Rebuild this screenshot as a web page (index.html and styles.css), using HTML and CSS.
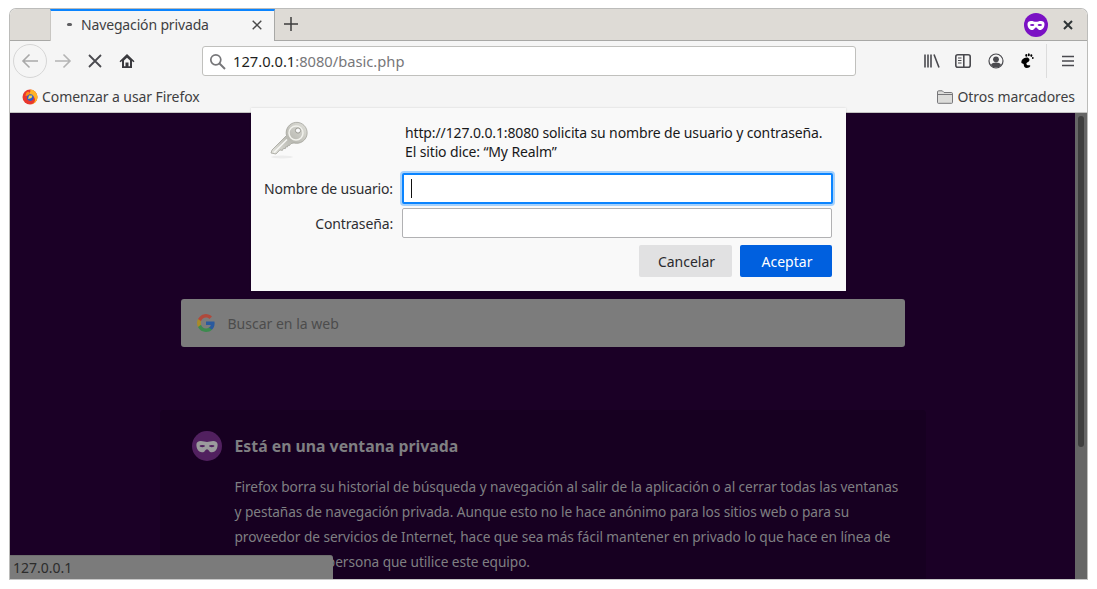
FILE: index.html
```html
<!DOCTYPE html>
<html lang="es">
<head>
<meta charset="utf-8">
<title>Navegación privada</title>
<link rel="stylesheet" href="styles.css">
</head>
<body>
<div class="window">
  <div class="tabbar">
    <div class="tab">
      <span class="tab-dot"></span>
      <span class="tab-title">Navegación privada</span>
      <svg class="tab-close" width="10" height="10" viewBox="0 0 10 10"><path d="M.7.7l8.600 8.600M9.300.7L.7 9.300" stroke="#4a4a4a" stroke-width="1.400" fill="none"/></svg>
    </div>
    <svg class="newtab" width="16" height="16" viewBox="0 0 16 16"><path d="M8 1v14M1 8h14" stroke="#3d3d3d" stroke-width="1.500" fill="none"/></svg>
    <span class="tab-fill"></span>
    <svg class="mask-badge" width="24" height="24" viewBox="0 0 24 24"><circle cx="12" cy="12" r="12" fill="#7a11c4"/><path d="M3.500 11c0-2 1.500-3 3.500-3 2 0 3.500.8 5 .8s3-.8 5-.8 3.500 1 3.500 3c0 3.500-2 6-4.500 6-2.500 0-2.500-2.500-4-2.500S10.500 17 8 17c-2.500 0-4.500-2.500-4.500-6z" fill="#fff"/><ellipse cx="8.200" cy="12" rx="2.200" ry=".9" fill="#7a11c4"/><ellipse cx="15.800" cy="12" rx="2.200" ry=".9" fill="#7a11c4"/></svg>
    <svg class="win-close" width="10" height="10" viewBox="0 0 10 10"><path d="M1 1l8 8M9 1L1 9" stroke="#2e3436" stroke-width="2" fill="none"/></svg>
  </div>
  <div class="navbar">
    <span class="back-btn"><svg width="18" height="16" viewBox="0 0 18 16"><path d="M17 8H2M8.500 1.500L2 8l6.500 6.500" stroke="#a9a9a9" stroke-width="1.600" fill="none"/></svg></span>
    <svg class="forward" width="18" height="16" viewBox="0 0 18 16"><path d="M1 8h15M9.500 1.500L16 8l-6.500 6.500" stroke="#b4b4b4" stroke-width="1.600" fill="none"/></svg>
    <svg class="stop" width="14" height="14" viewBox="0 0 14 14"><path d="M1 1l12 12M13 1L1 13" stroke="#4a4a4f" stroke-width="1.800" fill="none"/></svg>
    <svg class="home" width="16" height="16" viewBox="0 0 16 16"><path d="M8 1L.5 8.200l1 1L3 7.900V15h10V7.900l1.500 1.300 1-1z" fill="#3a3a3e"/><path d="M5 7.500L8 4.700l3 2.800v5.700H9.500V9.500h-3v3.700H5z" fill="#f5f5f5"/></svg>
    <div class="urlbar">
      <svg width="17" height="17" viewBox="0 0 17 17"><circle cx="6.800" cy="6.800" r="5" stroke="#77777a" stroke-width="1.700" fill="none"/><path d="M10.500 10.500L16 16" stroke="#77777a" stroke-width="2" fill="none"/></svg>
      <span class="url"><span class="url-host">127.0.0.1</span>:8080/basic.php</span>
    </div>
    <div class="tools">
      <svg width="16" height="16" viewBox="0 0 16 16"><path d="M1 1.500v13M4 1.500v13M7 1.500v13M10 1.500l5 13" stroke="#4a4a4f" stroke-width="1.600" fill="none"/></svg>
      <svg class="tool-sidebar" width="16" height="14" viewBox="0 0 16 14"><rect x=".8" y=".8" width="14.400" height="12.400" rx="2" stroke="#4a4a4f" stroke-width="1.600" fill="none"/><path d="M8.800 1v12" stroke="#4a4a4f" stroke-width="1.600"/><path d="M3 4h3.500M3 6.500h3.500M3 9h3.500" stroke="#4a4a4f" stroke-width="1.200"/></svg>
      <svg class="tool-account" width="16" height="16" viewBox="0 0 16 16"><circle cx="8" cy="8" r="7" stroke="#4a4a4f" stroke-width="1.200" fill="none"/><circle cx="8" cy="6.300" r="2.900" fill="#4a4a4f"/><path d="M2.800 12c1-2 3-2.600 5.200-2.600s4.200.6 5.200 2.600C12 13.700 10 14.500 8 14.500S4 13.700 2.800 12z" fill="#4a4a4f"/></svg>
      <svg width="14" height="16" viewBox="0 0 14 16"><path d="M6.500 4.500c-3 .2-5 2.200-5.200 4.500-.1 1.300 1 1.500 1.900 1.800 1.100.4.200 1.900 1.300 3.300 1 1.200 3.400 1 4.900.1 1.100-.7 1.200-1.700.3-1.900-1.400-.3-3 .1-3.300-1.400-.2-1 .9-1.500 2-2.100 1-.6 1.300-1.600.9-2.800-.4-1-1.600-1.600-2.800-1.500z" fill="#000"/><ellipse cx="6.300" cy="2.400" rx="1" ry="1.400" fill="#000"/><ellipse cx="8.800" cy="1.800" rx="1" ry="1.500" fill="#000"/><ellipse cx="11.300" cy="2.600" rx="1" ry="1.400" fill="#000"/><ellipse cx="12.800" cy="5" rx=".9" ry="1.100" fill="#000"/></svg>
    </div>
    <span class="nav-sep"></span>
    <svg class="menu" width="12" height="12" viewBox="0 0 12 12"><path d="M0 1.500h12M0 6h12M0 10.500h12" stroke="#4a4a4f" stroke-width="1.500" fill="none"/></svg>
  </div>
  <div class="bookmarks">
    <span class="bookmark">
      <svg width="16" height="16" viewBox="0 0 16 16"><circle cx="8" cy="8" r="7.500" fill="#e8372d"/><path d="M8 .5a7.500 7.500 0 0 1 7.500 7.500c0 2-1 4.500-3 6-1 .7-2.500 1.500-4.500 1.500 3 0 5-2.300 5-4.700 0-2.300-1.700-4.300-4-4.300L7 5C8 3.500 9 2 8 .5z" fill="#ffb326"/><circle cx="8.300" cy="8.600" r="3.300" fill="#2a5bd0"/><path d="M5 3c1.500-.5 2.500 0 3 1.500L6 6.500 3.500 7C3.500 5.500 4 4 5 3z" fill="#ff8a1c"/><path d="M7 6.500h3.500l-1 2.500-3.500 1z" fill="#ffd43a"/></svg>
      Comenzar a usar Firefox
    </span>
    <span class="bookmark bookmark-other">
      <svg width="16" height="14" viewBox="0 0 16 14"><path d="M.5 12.500V2A1.200 1.200 0 0 1 1.700.8h3.600L7 2.500h7.300A1.200 1.200 0 0 1 15.500 3.700v8.800a.8.800 0 0 1-.8.800H1.300a.8.800 0 0 1-.8-.8z" fill="#dcdcda" stroke="#77777a"/><path d="M1 4.500h14" stroke="#77777a"/></svg>
      Otros marcadores
    </span>
  </div>
  <main class="content">
    <div class="page">
      <div class="search">
        <svg width="18" height="18" viewBox="0 0 18 18"><path d="M17.600 9.200c0-.6-.1-1.300-.2-1.800H9v3.500h4.800a4.100 4.100 0 0 1-1.800 2.700v2.200h2.900c1.700-1.600 2.700-3.900 2.700-6.600z" fill="#2a5a9e"/><path d="M9 18c2.400 0 4.500-.8 5.900-2.200L12 13.600c-.8.500-1.800.9-3 .9-2.300 0-4.300-1.600-5-3.700H1v2.300A9 9 0 0 0 9 18z" fill="#3c8a4e"/><path d="M4 10.700a5.400 5.400 0 0 1 0-3.400V5H1a9 9 0 0 0 0 8z" fill="#a88a2a"/><path d="M9 3.600c1.300 0 2.500.5 3.400 1.300L15 2.400A9 9 0 0 0 1 5l3 2.300c.7-2.100 2.700-3.700 5-3.700z" fill="#b0493c"/></svg>
        <span class="search-text">Buscar en la web</span>
      </div>
      <section class="card">
        <div class="card-head">
          <svg width="30" height="30" viewBox="0 0 24 24"><circle cx="12" cy="12" r="12" fill="#51205f"/><path d="M3.500 11c0-2 1.500-3 3.500-3 2 0 3.500.8 5 .8s3-.8 5-.8 3.500 1 3.500 3c0 3.500-2 6-4.500 6-2.500 0-2.500-2.500-4-2.500S10.500 17 8 17c-2.500 0-4.500-2.500-4.500-6z" fill="#9b9b9d"/><ellipse cx="8.200" cy="12" rx="2.200" ry=".9" fill="#51205f"/><ellipse cx="15.800" cy="12" rx="2.200" ry=".9" fill="#51205f"/></svg>
          <h1 class="card-title">Está en una ventana privada</h1>
        </div>
        <p class="card-text">Firefox borra su historial de búsqueda y navegación al salir de la aplicación o al cerrar todas las ventanas y pestañas de navegación privada. Aunque esto no le hace anónimo para los sitios web o para su proveedor de servicios de Internet, hace que sea más fácil mantener en privado lo que hace en línea de cualquier otra persona que utilice este equipo.</p>
      </section>
    </div>
    <div class="scrollbar"><span class="thumb"></span></div>
    <div class="status">127.0.0.1</div>
  </main>
  <div class="dialog">
    <div class="dialog-head">
      <svg class="key" width="40" height="40" viewBox="0 0 40 40">
        <defs><linearGradient id="keyfill" x1="0" y1="1" x2="1" y2="0"><stop offset="0" stop-color="#e6e6e0"/><stop offset=".5" stop-color="#b9b9b2"/><stop offset="1" stop-color="#e2e2dc"/></linearGradient></defs>
        <ellipse cx="13" cy="37" rx="11" ry="1.500" fill="#ececec"/>
        <path d="M2 33l1-3L17.500 15.500A10.500 10.500 0 1 1 25 23l-3 .5-1.500 2-1.500-.3-.5 1.800-1.800-.2-.3 1.800-2-.2-1 2-2.500-.5L7 34z" fill="url(#keyfill)" stroke="#a2a29b" stroke-width=".8"/>
        <circle cx="27" cy="13" r="7" fill="none" stroke="#f1f1ec" stroke-width="1.500"/>
        <circle cx="29" cy="10.500" r="2.600" fill="#fafafa" stroke="#9a9a93"/>
        <path d="M5 32.500L18 19.500" stroke="#f8f8f5" stroke-width="1.500"/>
      </svg>
      <p class="dialog-msg">http://127.0.0.1:8080 solicita su nombre de usuario y contraseña.<br>El sitio dice: “My Realm”</p>
    </div>
    <div class="form-row">
      <label class="form-label">Nombre de usuario:</label>
      <div class="input input-focus"><span class="caret"></span></div>
    </div>
    <div class="form-row">
      <label class="form-label">Contraseña:</label>
      <div class="input"></div>
    </div>
    <div class="dialog-actions">
      <button class="btn">Cancelar</button>
      <button class="btn btn-primary">Aceptar</button>
    </div>
  </div>
</div>
</body>
</html>
```
FILE: styles.css
```css
* { box-sizing: border-box; }
html, body { margin: 0; height: 100%; overflow: hidden; background: #fff; }
body {
  padding: 8px 9px 9px;
  font-family: "Noto Sans", "Open Sans", sans-serif;
  font-size: 14px;
  color: #3c3c3f;
}
.window {
  position: relative;
  height: 572px;
  display: flex;
  flex-direction: column;
  border: 1px solid #bcbcba;
  border-bottom-color: #c8c8c8;
  border-radius: 7px 7px 0 0;
  overflow: hidden;
}
.tabbar {
  height: 32px;
  flex: none;
  display: flex;
  align-items: center;
  padding-left: 40px;
  background: #dedbd6;
  border-bottom: 1px solid #a8a8a6;
}
.tab {
  width: 225px;
  height: 32px;
  flex: none;
  display: flex;
  align-items: center;
  padding: 0 12px 2px 16px;
  background: #f5f5f5;
  border-top: 2px solid #0a84ff;
  border-right: 1px solid #a8a8a6;
  border-left: 1px solid #c8c6c2;
}
.tab-dot { width: 5px; height: 3px; border-radius: 2px; background: #5f5f62; margin-right: 9px; }
.tab-title { flex: 1; color: #3f3f42; white-space: nowrap; letter-spacing: -.15px; }
.newtab { margin: 0 0 1px 8px; }
.tab-fill { flex: 1; }
.mask-badge { margin-right: 15px; }
.win-close { margin-right: 14px; }
.navbar {
  height: 40px;
  flex: none;
  display: flex;
  align-items: center;
  padding-left: 3px;
  background: #f5f5f5;
}
.back-btn {
  width: 34px;
  height: 34px;
  flex: none;
  display: flex;
  align-items: center;
  justify-content: center;
  border: 1px solid #d6d6d6;
  border-radius: 50%;
}
.forward { margin-left: 7px; }
.stop { margin-left: 16px; }
.home { margin-left: 17px; }
.urlbar {
  width: 654px;
  height: 30px;
  margin-left: 67px;
  flex: none;
  display: flex;
  align-items: center;
  gap: 7px;
  padding-left: 6px;
  background: #fff;
  border: 1px solid #c0c0bd;
  border-radius: 3px;
  color: #77777a;
}
.url-host { color: #1f1f22; }
.url { white-space: nowrap; font-size: 14.700px; }
.tools { display: flex; align-items: center; gap: 16px; margin-left: 68px; }
.tool-sidebar { margin-left: -1px; }
.tool-account { margin-left: 1px; }
.nav-sep { width: 1px; height: 34px; margin: 0 15px 0 12px; background: #dcdcdc; }
.bookmarks {
  height: 32px;
  flex: none;
  display: flex;
  align-items: center;
  justify-content: space-between;
  padding: 0 12px 0 12px;
  background: #f5f5f5;
  border-bottom: 1px solid #c4c4c2;
}
.bookmark { display: flex; align-items: center; gap: 4px; color: #3f3f42; white-space: nowrap; letter-spacing: -.09px; }
.bookmark-other { letter-spacing: -.06px; }
.bookmark-other svg { margin-top: 1px; }
.content {
  position: relative;
  flex: 1;
  min-height: 0;
  display: flex;
  background: #1b0026;
  overflow: hidden;
}
.page { flex: 1; min-width: 0; display: flex; flex-direction: column; align-items: center; padding-top: 186px; }
.search {
  width: 724px;
  height: 48px;
  flex: none;
  display: flex;
  align-items: center;
  gap: 13px;
  padding-left: 16px;
  background: #7c7c7c;
  border-radius: 3px;
}
.search-text { color: #4c4c4c; }
.card {
  width: 766px;
  flex: none;
  margin-top: 63px;
  padding: 21px 24px 20px 32px;
  background: #170021;
  border-radius: 4px;
}
.card-head { display: flex; align-items: center; gap: 13px; height: 30px; }
.card-title { margin: 0; font-size: 15.800px; font-weight: 700; color: #7f7f82; white-space: nowrap; }
.card-text { margin: 13px 0 0 43px; font-size: 13.700px; letter-spacing: -.07px; line-height: 25px; color: #7f7f82; }
.scrollbar {
  width: 12px;
  flex: none;
  padding: 3px 2px;
  background: #666666;
}
.thumb { display: block; width: 6px; height: 331px; margin: 0 auto; background: #3f3f3f; border-radius: 3px; }
.status {
  position: absolute;
  left: 0;
  bottom: 0;
  width: 323px;
  height: 24px;
  padding: 2px 3px 0;
  background: #7b7b7b;
  color: #2c2c2c;
  border-radius: 0 3px 0 0;
  border-top: 1px solid #6e6e6e;
}
.dialog {
  position: absolute;
  left: 241px;
  top: 99px;
  width: 595px;
  height: 183px;
  padding: 10px 14px 0;
  background: #f9f9f9;
  box-shadow: 0 0 2px rgba(0, 0, 0, .15);
}
.dialog-head { display: flex; height: 53px; margin-bottom: 2px; }
.key { flex: none; margin: 2px 0 0 4px; }
.dialog-msg { margin: 6px 0 0 96px; color: #18181a; line-height: 18.500px; white-space: nowrap; letter-spacing: -.13px; }
.form-row { display: flex; align-items: flex-start; justify-content: flex-end; gap: 9px; height: 30px; margin-bottom: 5px; }
.form-label { color: #2e2e31; white-space: nowrap; line-height: 32px; letter-spacing: -.14px; }
.input {
  width: 430px;
  height: 30px;
  flex: none;
  display: flex;
  align-items: center;
  padding-left: 7px;
  background: #fff;
  border: 1px solid #b1b1b3;
  border-radius: 2px;
}
.input-focus {
  width: 431px;
  height: 31px;
  margin-right: -1px;
  border: 2px solid #0a84ff;
  box-shadow: 0 0 0 2px #a6d1fb;
}
.caret { width: 1px; height: 19px; background: #111; }
.dialog-actions { display: flex; justify-content: flex-end; gap: 8px; margin-top: 7px; }
.btn {
  width: 93px;
  height: 32px;
  padding: 0 0 0 2px;
  border: none;
  border-radius: 2px;
  background: #e1e1e2;
  color: #2a2a2e;
  font: inherit;
}
.btn-primary { width: 92px; background: #0060df; color: #fff; }
```
